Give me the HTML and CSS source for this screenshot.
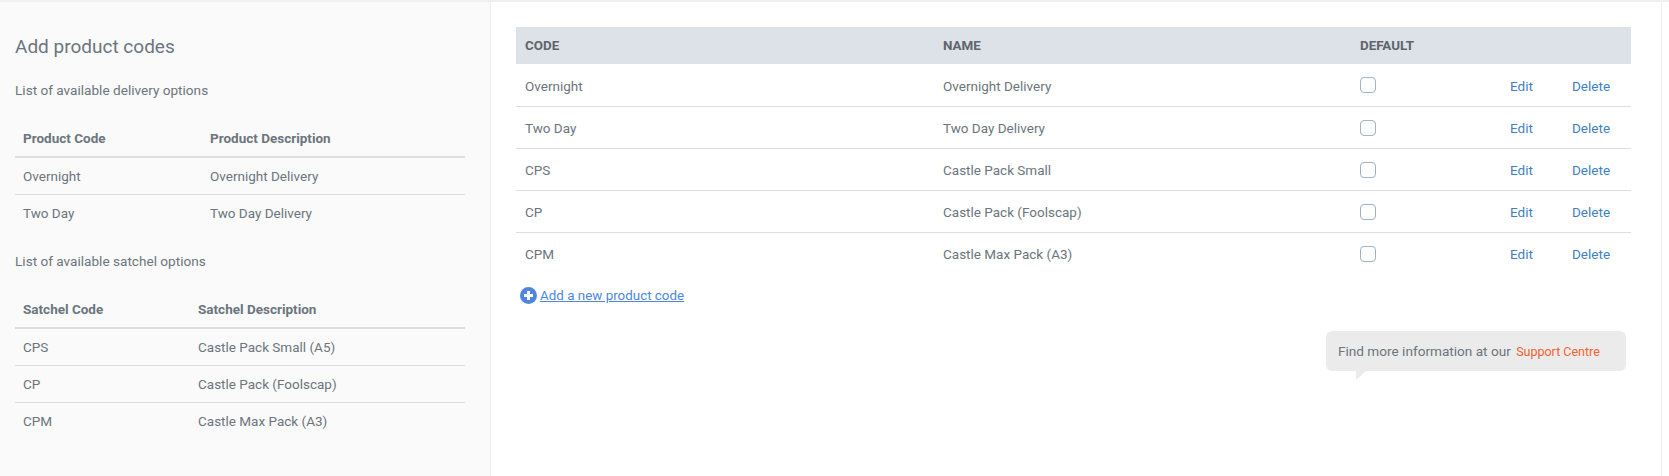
FILE: index.html
```html
<!DOCTYPE html>
<html lang="en">

<head>
    <meta charset="UTF-8">
    <title>Product codes</title>
    <link rel="stylesheet" href="styles.css">
</head>

<body>
    <div class="page">
        <div class="sidePanel">
            <h2 class="panelTitle">Add product codes</h2>
            <p class="listTitle">List of available delivery options</p>
            <table class="infoTable deliveryTable">
                <thead>
                    <tr><th>Product Code</th><th>Product Description</th></tr>
                </thead>
                <tbody>
                    <tr><td>Overnight</td><td>Overnight Delivery</td></tr>
                    <tr><td>Two Day</td><td>Two Day Delivery</td></tr>
                </tbody>
            </table>
            <p class="listTitle satchelTitle">List of available satchel options</p>
            <table class="infoTable satchelTable">
                <thead>
                    <tr><th>Satchel Code</th><th>Satchel Description</th></tr>
                </thead>
                <tbody>
                    <tr><td>CPS</td><td>Castle Pack Small (A5)</td></tr>
                    <tr><td>CP</td><td>Castle Pack (Foolscap)</td></tr>
                    <tr><td>CPM</td><td>Castle Max Pack (A3)</td></tr>
                </tbody>
            </table>
        </div>

        <div class="mainPanel">
            <table class="codeTable">
                <thead>
                    <tr><th class="codeCol">Code</th><th class="nameCol">Name</th><th class="defaultCol">Default</th><th class="editCol"></th><th class="deleteCol"></th></tr>
                </thead>
                <tbody>
                    <tr><td>Overnight</td><td>Overnight Delivery</td><td><span class="checkBox"></span></td><td><a class="rowLink" href="#">Edit</a></td><td><a class="rowLink" href="#">Delete</a></td></tr>
                    <tr><td>Two Day</td><td>Two Day Delivery</td><td><span class="checkBox"></span></td><td><a class="rowLink" href="#">Edit</a></td><td><a class="rowLink" href="#">Delete</a></td></tr>
                    <tr><td>CPS</td><td>Castle Pack Small</td><td><span class="checkBox"></span></td><td><a class="rowLink" href="#">Edit</a></td><td><a class="rowLink" href="#">Delete</a></td></tr>
                    <tr><td>CP</td><td>Castle Pack (Foolscap)</td><td><span class="checkBox"></span></td><td><a class="rowLink" href="#">Edit</a></td><td><a class="rowLink" href="#">Delete</a></td></tr>
                    <tr><td>CPM</td><td>Castle Max Pack (A3)</td><td><span class="checkBox"></span></td><td><a class="rowLink" href="#">Edit</a></td><td><a class="rowLink" href="#">Delete</a></td></tr>
                </tbody>
            </table>

            <div class="addRow">
                <svg class="addIcon" width="17" height="17" viewBox="0 0 17 17">
                    <circle cx="8.5" cy="8.5" r="8.5" fill="#4f86dc"></circle>
                    <path d="M8.5 4v9M4 8.5h9" stroke="#fff" stroke-width="3"></path>
                </svg>
                <a class="addLink" href="#">Add a new product code</a>
            </div>

            <div class="bubbleRow">
                <div class="bubble">Find more information at our <a class="supportLink" href="#">Support Centre</a></div>
            </div>
        </div>
    </div>
</body>

</html>
```

FILE: styles.css
```css
* {
    box-sizing: border-box;
}

body {
    margin: 0;
    font-family: 'Roboto', 'Liberation Sans', sans-serif;
    font-size: 14px;
    color: #6c757d;
    background-color: #fff;
    border-top: 2px solid #f0f0f0;
}

.page {
    display: flex;
    width: 1662px;
    height: 474px;
    border-right: 1px solid #f2f2f2;
}

.sidePanel {
    width: 491px;
    padding: 32px 25px 0 15px;
    background-color: #fafafa;
    border-right: 1px solid #f0f0f0;
}

.panelTitle {
    margin: 0;
    font-size: 19px;
    line-height: 26px;
    font-weight: 400;
}

.listTitle {
    margin: 20px 0 0;
    line-height: 20px;
    font-size: 13.6px;
}

.satchelTitle {
    margin-top: 20px;
}

table {
    border-collapse: collapse;
    table-layout: fixed;
}

.infoTable {
    width: 450px;
    margin-top: 16px;
    font-size: 13.5px;
}

.infoTable th {
    height: 41px;
    padding: 4px 8px 0;
    text-align: left;
    font-weight: 700;
    border-bottom: 2px solid #dedede;
}

.infoTable td {
    height: 37px;
    padding: 0 8px;
    border-bottom: 1px solid #dedede;
}

.infoTable tbody tr:last-child td {
    border-bottom: none;
}

.deliveryTable th:first-child {
    width: 187px;
}

.satchelTable th:first-child {
    width: 175px;
}

.mainPanel {
    flex: 1;
    padding: 25px 29px 0 25px;
}

.codeTable {
    width: 1115px;
    font-size: 13.5px;
}

.codeTable th {
    height: 37px;
    padding: 0 9px;
    text-align: left;
    font-weight: 700;
    font-size: 13.4px;
    text-transform: uppercase;
    color: #5f656c;
    background-color: #dde1e8;
}

.codeTable td {
    height: 42px;
    padding: 2px 9px 0;
    border-bottom: 1px solid #dedede;
}

.codeTable tbody tr:last-child td {
    border-bottom: none;
}

.codeCol {
    width: 418px;
}

.nameCol {
    width: 417px;
}

.defaultCol {
    width: 150px;
}

.editCol {
    width: 62px;
}

.checkBox {
    display: block;
    width: 16px;
    height: 16px;
    margin-top: -1px;
    background-color: #fff;
    border: 1px solid #a3b3bf;
    border-radius: 4px;
}

.rowLink {
    color: #3f7fc4;
    text-decoration: none;
}

.addRow {
    display: flex;
    align-items: center;
    gap: 3px;
    margin-top: 13px;
    padding-left: 4px;
}

.addLink {
    color: #4f86dc;
    font-size: 13.4px;
}

.bubbleRow {
    display: flex;
    justify-content: flex-end;
    margin-top: 27px;
    padding-right: 6px;
}

.bubble {
    position: relative;
    width: 300px;
    height: 40px;
    padding-left: 12px;
    line-height: 40px;
    font-size: 13.6px;
    background-color: #ebebeb;
    border-radius: 6px;
}

.bubble::after {
    content: "";
    position: absolute;
    left: 30px;
    top: 100%;
    border-top: 9px solid #ebebeb;
    border-right: 10px solid transparent;
}

.supportLink {
    margin-left: 2px;
    color: #f4622e;
    text-decoration: none;
    font-size: 12.5px;
}
```
